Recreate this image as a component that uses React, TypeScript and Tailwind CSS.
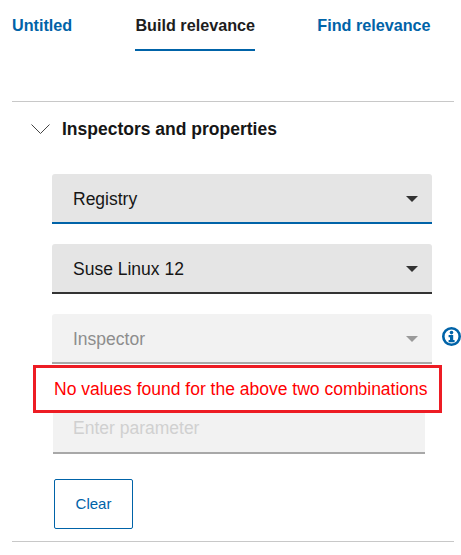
const font = { fontFamily: '"Liberation Sans", Arial, sans-serif' };

function Caret({ color }: { color: string }) {
  return (
    <svg width="12" height="6" viewBox="0 0 12 6" className="absolute right-[14px] top-[22px]">
      <path d="M0 0H12L6 6Z" fill={color} />
    </svg>
  );
}

function Select({ label, state }: { label: string; state: "focus" | "normal" | "disabled" }) {
  const border =
    state === "focus"
      ? "border-b-2 border-[#0063a8] bg-[#e5e5e5] text-[#161616]"
      : state === "normal"
        ? "border-b-2 border-[#333333] bg-[#e5e5e5] text-[#161616]"
        : "border-b-2 border-[#a8a8a8] bg-[#f2f2f2] text-[#8d8d8d]";
  return (
    <div className={`relative flex h-[50px] w-[380px] items-center rounded-t-[3px] pl-[21px] pt-[2px] text-[17.5px] ${border}`}>
      {label}
      <Caret color={state === "disabled" ? "#9a9a9a" : "#333333"} />
    </div>
  );
}

export default function App() {
  return (
    <div className="h-[555px] w-[461px] overflow-hidden bg-white" style={font}>
      <div className="flex h-[51px] items-start pl-[12px] pt-[13px] text-[16.2px] font-bold">
        <span className="text-[#0063a8]">Untitled</span>
        <span className="ml-[63px] flex h-[38px] w-[120px] justify-center border-b-2 border-[#0063a8] text-[#1d1d1d]">
          Build relevance
        </span>
        <span className="ml-[62px] text-[#0063a8]">Find relevance</span>
      </div>

      <div className="mx-[12px] mt-[50px] h-[1px] w-[442px] bg-[#c8c8c8]" />

      <div className="flex h-[54px] items-center pl-[31px]">
        <svg width="19" height="11" viewBox="0 0 19 11" fill="none" stroke="#444444" strokeWidth="1">
          <path d="M0.5 0.5L9.5 9.5L18.5 0.5" />
        </svg>
        <span className="ml-[12px] text-[17.5px] font-bold text-[#161616]">Inspectors and properties</span>
      </div>

      <div className="ml-[52px] mt-[18px] flex flex-col gap-[20px]">
        <Select label="Registry" state="focus" />
        <Select label="Suse Linux 12" state="normal" />
        <div className="relative">
          <Select label="Inspector" state="disabled" />
          <svg width="19" height="19" viewBox="0 0 19 19" className="absolute left-[390px] top-[13px]">
            <circle cx="9.5" cy="9.5" r="8.2" fill="none" stroke="#0063a8" strokeWidth="2.6" />
            <circle cx="9.5" cy="5.6" r="1.8" fill="#0063a8" />
            <path d="M6.6 8H11.2V13H12.6V15.2H6.6V13H8V10.2H6.6Z" fill="#0063a8" />
          </svg>
        </div>
      </div>

      <div className="relative ml-[53px] mt-[40px] flex h-[50px] w-[372px] items-center rounded-t-[3px] border-b-2 border-[#a8a8a8] bg-[#f2f2f2] pl-[20px] text-[17.5px] text-[#d0d0d0]">
        Enter parameter
        <div className="absolute left-[-20px] top-[-39px] flex h-[48px] w-[409px] items-center border-[3px] border-[#ed1c24] bg-white pl-[18px] whitespace-nowrap text-[#ff0000]">
          No values found for the above two combinations
        </div>
      </div>

      <button className="ml-[54px] mt-[25px] flex h-[50px] w-[79px] items-center justify-center rounded-[2px] border border-[#0063a8] text-[15px] text-[#0063a8]">
        Clear
      </button>

      <div className="mx-[12px] mt-[12px] h-[1px] w-[442px] bg-[#c8c8c8]" />
    </div>
  );
}
